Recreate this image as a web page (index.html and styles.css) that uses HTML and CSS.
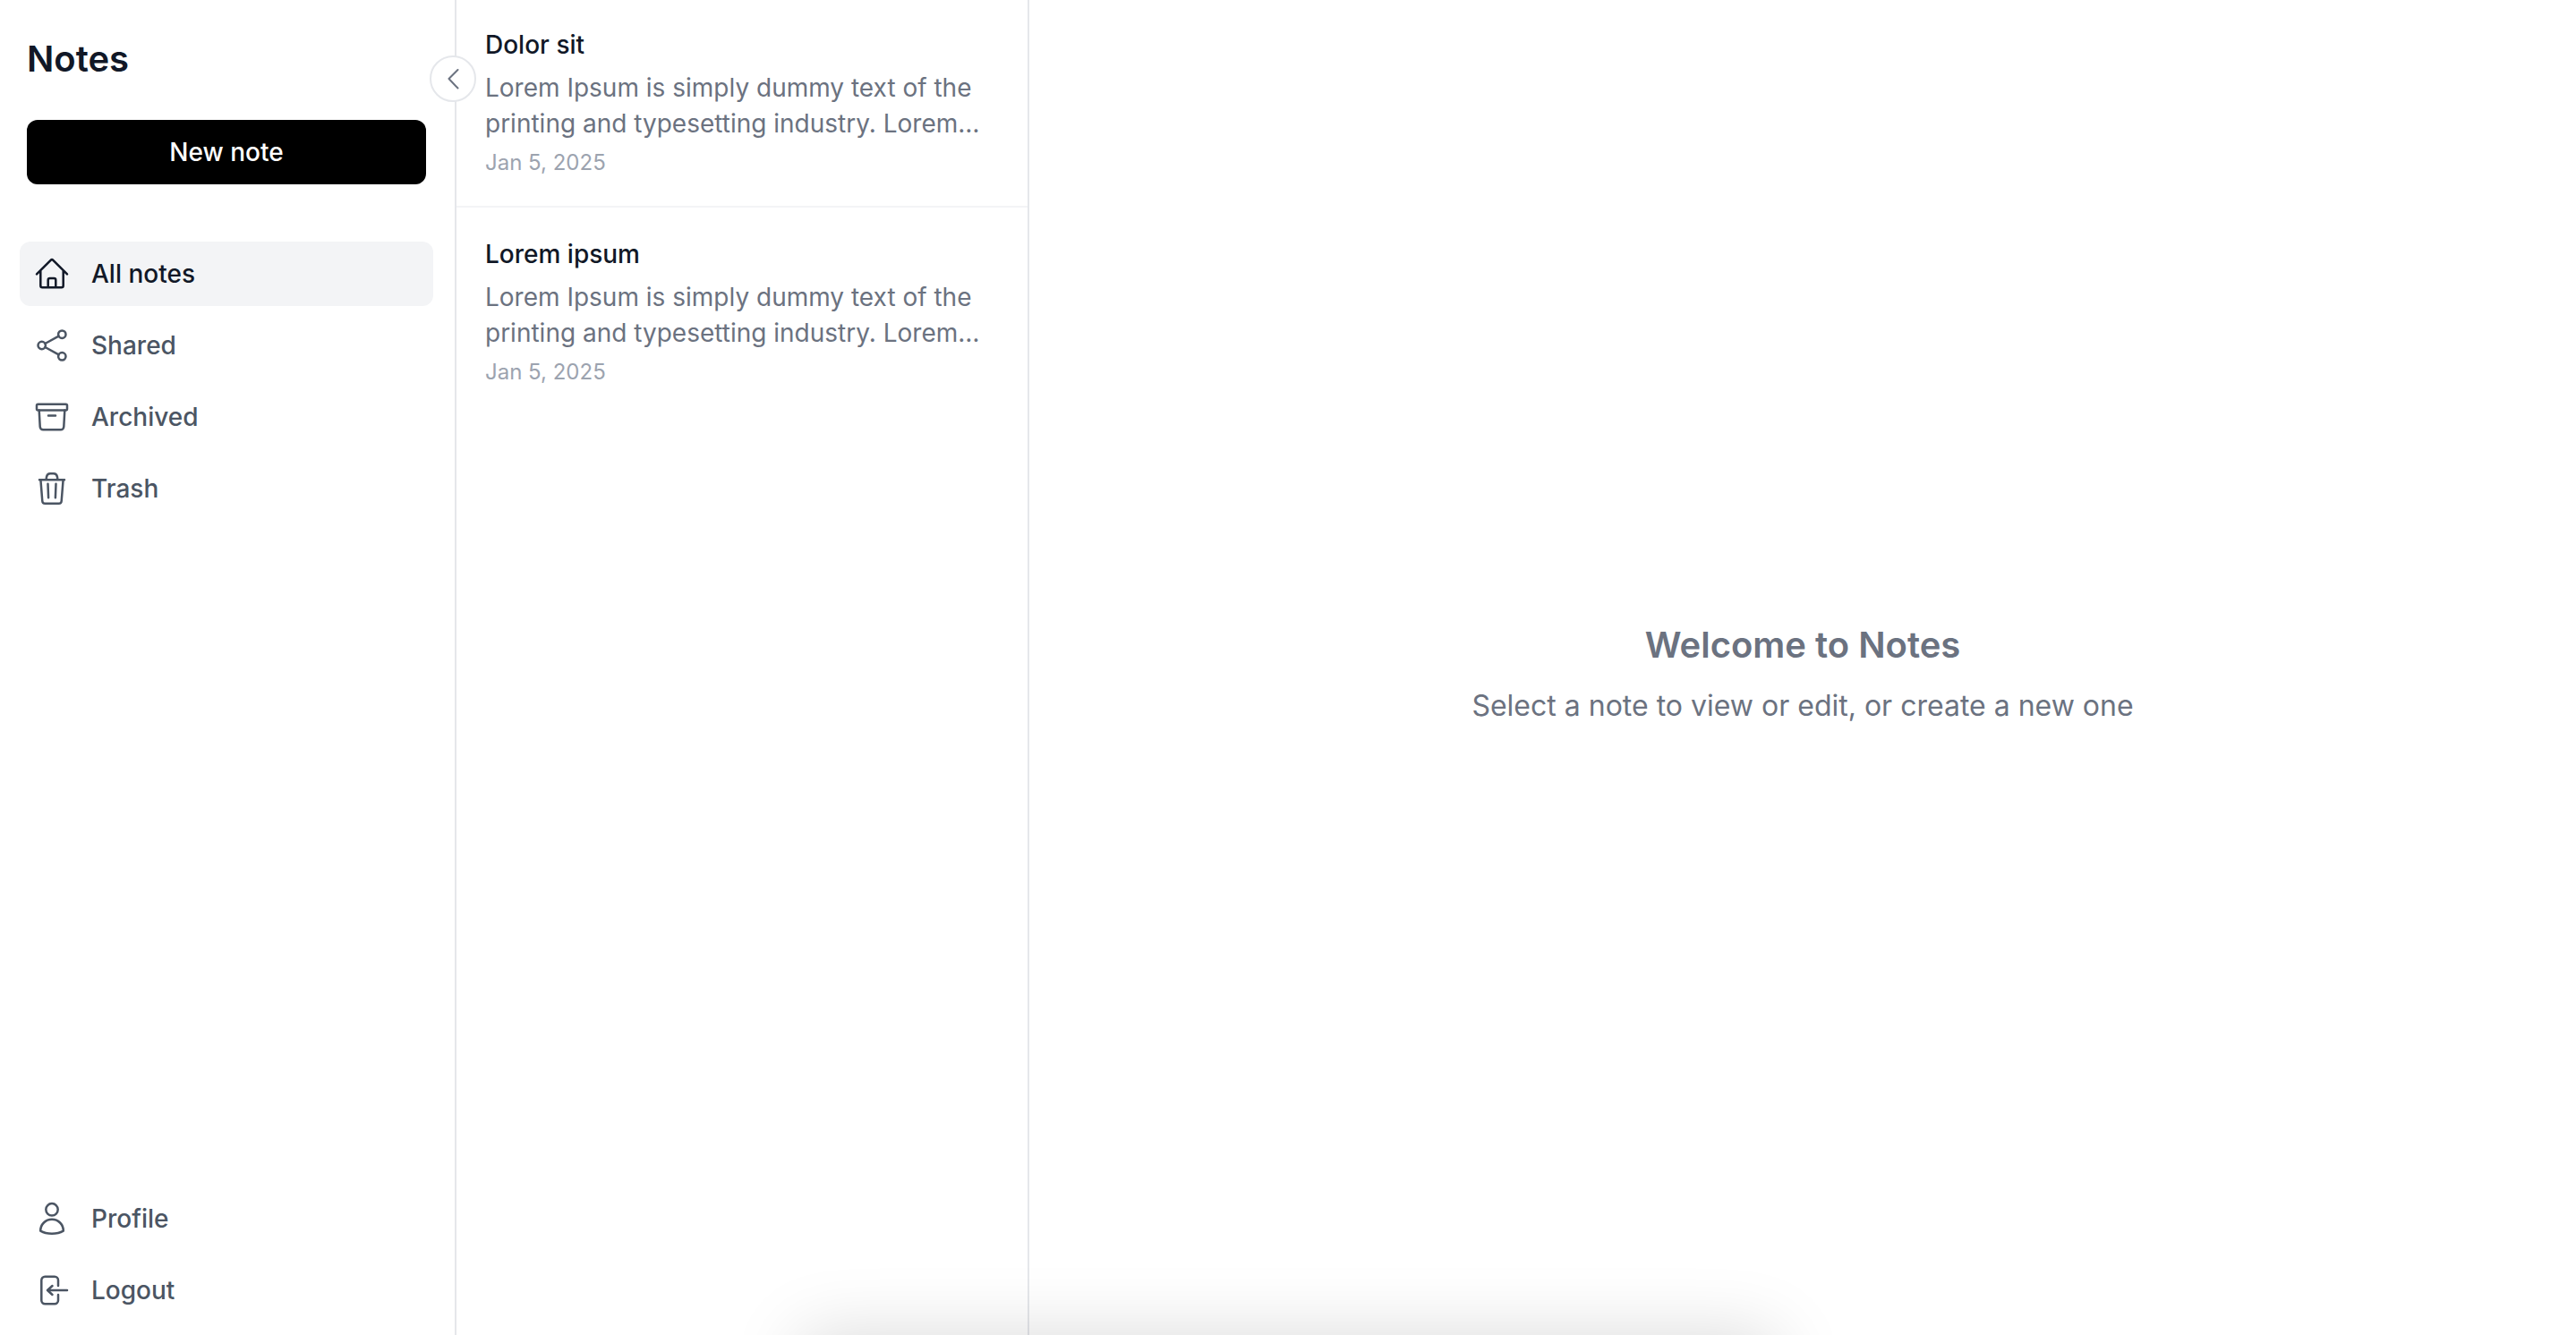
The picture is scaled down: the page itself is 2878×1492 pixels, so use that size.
FILE: index.html
```html
<!DOCTYPE html>
<html lang="en">
<head>
<meta charset="utf-8">
<title>Notes</title>
<link rel="stylesheet" href="styles.css">
</head>
<body>
<div class="app">
  <aside class="sidebar">
    <h1 class="brand">Notes</h1>
    <button class="new-note" type="button">New note</button>
    <nav class="nav">
      <a class="nav-item active" href="#all">
        <svg class="icon" viewBox="0 0 40 40"><path d="M3 20.3 18.6 4.8a2 2 0 0 1 2.8 0L37 20.3M7.3 16.5v16.8a2 2 0 0 0 2 2h21.4a2 2 0 0 0 2-2V16.5M15.7 35v-8a2 2 0 0 1 2-2h4.600a2 2 0 0 1 2 2v8"/></svg>
        <span>All notes</span>
      </a>
      <a class="nav-item" href="#shared">
        <svg class="icon" viewBox="0 0 40 40"><circle cx="8.7" cy="20" r="4.200"/><circle cx="31.3" cy="7.7" r="4.200"/><circle cx="31.3" cy="32.3" r="4.200"/><path d="m12.4 18 15.2-8.300M12.4 22l15.2 8.300"/></svg>
        <span>Shared</span>
      </a>
      <a class="nav-item" href="#archived">
        <svg class="icon" viewBox="0 0 40 40"><rect x="3" y="5.700" width="34" height="6.800" rx="1.500"/><path d="m5.7 12.5 1 18.3a3.500 3.500 0 0 0 3.500 3.500h19.600a3.500 3.500 0 0 0 3.500-3.500l1-18.300M16 18.4h8"/></svg>
        <span>Archived</span>
      </a>
      <a class="nav-item" href="#trash">
        <svg class="icon" viewBox="0 0 40 40"><path d="M6 10.2h28M7.4 10.2l1.900 23.800a3 3 0 0 0 3 2.800h15.400a3 3 0 0 0 3-2.800l1.900-23.800M13.7 9.500l.3-2.500c.4-2.300 1.700-3.700 4-3.700h4c2.300 0 3.600 1.400 4 3.700l.3 2.500M15.5 14.7l.6 15.600M24.5 14.7l-.6 15.600"/></svg>
        <span>Trash</span>
      </a>
    </nav>
    <nav class="nav account">
      <a class="nav-item" href="#profile">
        <svg class="icon" viewBox="0 0 40 40"><circle cx="20" cy="9.800" r="6.700"/><path d="M7.2 33.6C7.2 26.4 12.8 20.8 20 20.8s12.8 5.600 12.8 12.8C29 35.8 24.6 36.7 20 36.7S11 35.8 7.200 33.6Z"/></svg>
        <span>Profile</span>
      </a>
      <a class="nav-item" href="#logout">
        <svg class="icon" viewBox="0 0 40 40"><path d="M27 15V8.700a4 4 0 0 0-4-4H12.3a4 4 0 0 0-4 4v22.600a4 4 0 0 0 4 4H23a4 4 0 0 0 4-4V25M37 20H15M20.5 15 15 20l5.500 5"/></svg>
        <span>Logout</span>
      </a>
    </nav>
    <button class="collapse" type="button" aria-label="Collapse sidebar">
      <svg viewBox="0 0 32 32"><path d="M21.5 6 11.5 16l10 10.500"/></svg>
    </button>
  </aside>

  <section class="note-list" aria-label="Note list">
    <article class="note">
      <h2 class="note-title">Dolor sit</h2>
      <p class="note-preview">Lorem Ipsum is simply dummy text of the printing and typesetting industry. Lorem…</p>
      <time class="note-date" datetime="2025-01-05">Jan 5, 2025</time>
    </article>
    <article class="note">
      <h2 class="note-title">Lorem ipsum</h2>
      <p class="note-preview">Lorem Ipsum is simply dummy text of the printing and typesetting industry. Lorem…</p>
      <time class="note-date" datetime="2025-01-05">Jan 5, 2025</time>
    </article>
  </section>

  <main class="welcome">
    <h2 class="welcome-title">Welcome to Notes</h2>
    <p class="welcome-text">Select a note to view or edit, or create a new one</p>
  </main>
</div>
<div class="bottom-shadow" aria-hidden="true"></div>
</body>
</html>
```

FILE: styles.css
```css
* {
  box-sizing: border-box;
}

body {
  margin: 0;
  background: #fff;
  color: #111827;
  font-family: Inter, "Liberation Sans", sans-serif;
  font-size: 28px;
  line-height: 40px;
}

h1,
h2,
p {
  margin: 0;
}

.app {
  display: flex;
  min-height: 100vh;
}

.sidebar {
  position: relative;
  display: flex;
  flex-direction: column;
  flex: 0 0 510px;
  padding: 38px 24px 14px 22px;
  border-right: 2px solid #e5e7eb;
}

.brand {
  margin: 0 8px 40px;
  font-size: 40px;
  font-weight: 600;
  line-height: 56px;
}

.new-note {
  height: 72px;
  margin: 0 8px 64px;
  border: 0;
  border-radius: 12px;
  background: #000;
  color: #fff;
  font: inherit;
  font-weight: 500;
  cursor: pointer;
}

.nav {
  display: flex;
  flex-direction: column;
  gap: 8px;
}

.account {
  margin-top: auto;
}

.nav-item {
  display: flex;
  align-items: center;
  gap: 24px;
  padding: 16px;
  border-radius: 12px;
  color: #4b5563;
  font-weight: 500;
  text-decoration: none;
}

.nav-item.active {
  background: #f3f4f6;
  color: #111827;
}

.icon {
  width: 40px;
  height: 40px;
}

.icon,
.collapse svg {
  fill: none;
  stroke: currentColor;
  stroke-width: 2.5;
  stroke-linecap: round;
  stroke-linejoin: round;
}

.collapse {
  position: absolute;
  top: 62px;
  right: -24px;
  display: grid;
  place-items: center;
  width: 52px;
  height: 52px;
  padding: 0;
  border: 2px solid #e5e7eb;
  border-radius: 50%;
  background: #fff;
  color: #6b7280;
  cursor: pointer;
}

.collapse svg {
  width: 32px;
  height: 32px;
  stroke-width: 2;
}

.note-list {
  display: flex;
  flex-direction: column;
  gap: 2px;
  flex: 0 0 640px;
  border-right: 2px solid #e5e7eb;
}

.note {
  padding: 30px 32px 32px;
  border-bottom: 2px solid #f3f4f6;
}

.note:last-child {
  border-bottom: 0;
}

.note-title {
  font-size: 28px;
  font-weight: 500;
}

.note-preview {
  margin: 8px 0;
  color: #6b7280;
}

.note-date {
  display: block;
  color: #9ca3af;
  font-size: 24px;
  line-height: 32px;
}

.welcome {
  display: flex;
  flex: 1;
  flex-direction: column;
  align-items: center;
  justify-content: center;
  gap: 16px;
  padding-top: 14px;
  color: #6b7280;
  text-align: center;
}

.welcome-title {
  font-size: 40px;
  font-weight: 600;
  line-height: 56px;
}

.welcome-text {
  font-size: 32px;
  line-height: 48px;
}

.bottom-shadow {
  position: fixed;
  top: 100%;
  left: 50%;
  width: 1088px;
  height: 200px;
  margin-left: -544px;
  box-shadow: 0 0 80px rgba(0, 0, 0, 0.15);
  pointer-events: none;
}
```
